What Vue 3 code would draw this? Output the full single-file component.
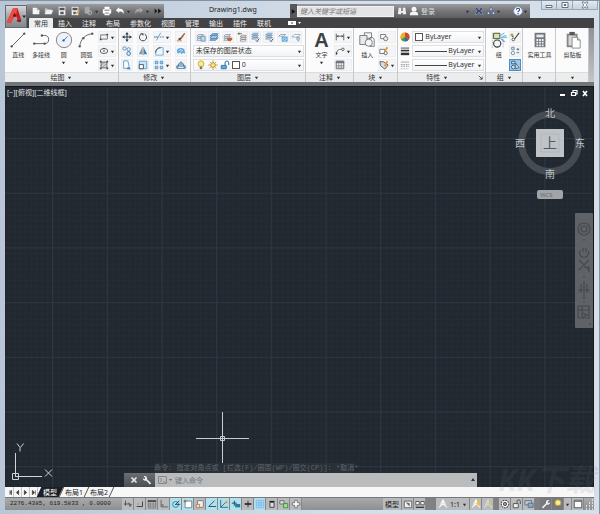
<script setup>
import { ref } from 'vue'

const quickItems = [
  { icon: 'new', label: '新建' },
  { icon: 'open', label: '打开' },
  { icon: 'save', label: '保存' },
  { icon: 'saveas', label: '另存为' },
  { icon: 'cloud', label: '云选项', menu: true },
  { icon: 'print', label: '打印' },
  { icon: 'undo', label: '放弃', menu: true },
  { icon: 'redo', label: '重做', menu: true },
  { icon: 'more', label: '更多' }
]
const tabs = ['常用', '插入', '注释', '布局', '参数化', '视图', '管理', '输出', '插件', '联机']
const activeTab = ref('常用')

const drawTools = [
  { icon: 'line', label: '直线' },
  { icon: 'pline', label: '多段线' },
  { icon: 'circle', label: '圆', menu: true },
  { icon: 'arc', label: '圆弧', menu: true }
]
const shapeTools = [
  { icon: 'rect', label: '矩形' },
  { icon: 'ellipse', label: '椭圆' },
  { icon: 'hatch', label: '图案填充' }
]
const modifyTools = [
  { icon: 'move', label: '移动' },
  { icon: 'rotate', label: '旋转' },
  { icon: 'trim', label: '修剪', menu: true },
  { icon: 'erase', label: '删除' },
  { icon: 'copy', label: '复制' },
  { icon: 'mirror', label: '镜像' },
  { icon: 'fillet', label: '圆角', menu: true },
  { icon: 'explode', label: '分解' },
  { icon: 'stretch', label: '拉伸' },
  { icon: 'scale', label: '缩放' },
  { icon: 'array', label: '阵列', menu: true },
  { icon: 'offset', label: '偏移' }
]
const layerTools = [
  { icon: 'lay1', label: '图层特性' },
  { icon: 'lay2', label: '置为当前' },
  { icon: 'lay3', label: '匹配' },
  { icon: 'lay4', label: '上一个' },
  { icon: 'lay5', label: '隔离' },
  { icon: 'lay5', label: '取消隔离' },
  { icon: 'lay6', label: '冻结' },
  { icon: 'lay7', label: '关闭' }
]
const noteTools = [
  { icon: 'dim', label: '标注', menu: true },
  { icon: 'leader', label: '引线', menu: true },
  { icon: 'table', label: '表格' }
]
const blockTools = [
  { icon: 'bcreate', label: '创建' },
  { icon: 'bedit', label: '编辑' },
  { icon: 'battr', label: '编辑属性', menu: true }
]
const groupTools = [
  { icon: 'ungroup', label: '解除编组' },
  { icon: 'gedit', label: '组编辑' },
  { icon: 'gpick', label: '组选择', on: true }
]
const statusTools = [
  { icon: 's-infer', label: '推断约束' },
  { icon: 's-snap', label: '捕捉模式' },
  { icon: 's-grid', label: '栅格显示' },
  { icon: 's-ortho', label: '正交模式' },
  { icon: 's-polar', label: '极轴追踪', on: true },
  { icon: 's-osnap', label: '对象捕捉', on: true },
  { icon: 's-3d', label: '三维对象捕捉' },
  { icon: 's-track', label: '对象捕捉追踪', on: true },
  { icon: 's-ducs', label: '动态 UCS', on: true },
  { icon: 's-dyn', label: '动态输入', on: true },
  { icon: 's-lwt', label: '线宽' },
  { icon: 's-tpy', label: '透明度', on: true },
  { icon: 's-qp', label: '快捷特性' },
  { icon: 's-sc', label: '选择循环' },
  { icon: 's-am', label: '注释监视器' }
]
const pagers = [
  { path: 'M5 1v6M7 1L5.500 4 7 7z', label: '首页' },
  { path: 'M6 1v6L3 4z', label: '上一页' },
  { path: 'M3 1v6l3-3z', label: '下一页' },
  { path: 'M3 1v6l3-3zM7 1v6', label: '末页' }
]
const layouts = ['模型', '布局1', '布局2']
const activeLayout = ref('模型')
const search = ref('')
const command = ref('')
</script>

<template>
  <div class="window">
    <svg class="defs" aria-hidden="true">
      <symbol id="i-new" viewBox="0 0 12 12"><path d="M2 2h5l3 3v5H2z" fill="#f4f4f4" /><path d="M7 2v3h3" fill="#aaa" /></symbol>
      <symbol id="i-open" viewBox="0 0 12 12"><path d="M1 10V3h3l1 1h4v2" fill="#c8c8c8" /><path d="M3 5h8L9 10H1z" fill="#f0f0f0" /></symbol>
      <symbol id="i-save" viewBox="0 0 12 12"><path d="M2 1h8v10H2z" fill="#f2f2f2" /><path d="M3 2h6v3H3zM4 7h4v3H4z" fill="#50565e" /></symbol>
      <symbol id="i-saveas" viewBox="0 0 12 12"><path d="M2 1h8v10H2z" fill="#f2f2f2" /><path d="M3 2h6v3H3zM4 7h3v3H4z" fill="#50565e" /><path d="M6 9l4-4 2 1-4 4z" fill="#e8a040" /></symbol>
      <symbol id="i-cloud" viewBox="0 0 12 12"><path d="M2 1h6v8H2z" fill="#a8a8a8" /><circle cx="8" cy="8" r="2.400" fill="none" stroke="#b4b4b4" stroke-width="1.200" /></symbol>
      <symbol id="i-print" viewBox="0 0 12 12"><path d="M3 1h6v3H3zM1 4h10v5H9v2H3V9H1z" fill="#fff" /><path d="M3 5h6M4 8.500h4" stroke="#555" /></symbol>
      <symbol id="i-undo" viewBox="0 0 12 12"><path d="M1 5l4-3.500v2c4-.5 6 2 5.500 6C9.500 7 8 6.500 5 6.500v2z" fill="#fff" /></symbol>
      <symbol id="i-redo" viewBox="0 0 12 12"><path d="M11 5L7 1.500v2C3 3 1 5.500 1.500 9.500 2.500 7 4 6.500 7 6.500v2z" fill="#a6a6a6" /></symbol>
      <symbol id="i-more" viewBox="0 0 12 12"><path d="M2 3l3 3-3 3zM6 3l4 3-4 3z" fill="#161616" /></symbol>

      <symbol id="i-line" viewBox="0 0 20 20"><path d="M3 17L17 3" stroke="#555a60" stroke-width="1" /><circle cx="3" cy="17" r="1.300" fill="#555" /><circle cx="17" cy="3" r="1.300" fill="#555" /></symbol>
      <symbol id="i-pline" viewBox="0 0 20 20"><path d="M2 14h12a4 4 0 0 0 0-9h-3" fill="none" stroke="#555a60" /><circle cx="2.500" cy="14" r="1.300" fill="#555" /><circle cx="14" cy="14" r="1.300" fill="#555" /><circle cx="11" cy="5" r="1.300" fill="#555" /></symbol>
      <symbol id="i-circle" viewBox="0 0 20 20"><circle cx="10" cy="10" r="8.500" fill="#f0f3f6" stroke="#777c82" /><path d="M10 10l4-4" stroke="#3573b5" /><circle cx="9.500" cy="10.500" r="1.300" fill="#2a68ad" /></symbol>
      <symbol id="i-arc" viewBox="0 0 20 20"><path d="M3 17C4 9 9 4 17 3" fill="none" stroke="#555a60" /><circle cx="3" cy="17" r="1.300" fill="#555" /><circle cx="7" cy="8" r="1.300" fill="#555" /><circle cx="17" cy="3" r="1.300" fill="#555" /></symbol>
      <symbol id="i-rect" viewBox="0 0 12 12"><path d="M2 3.500h8v5H2z" fill="none" stroke="#5b6068" /><path d="M1 8h2v2H1zM9 2h2v2H9z" fill="#44494f" /></symbol>
      <symbol id="i-ellipse" viewBox="0 0 12 12"><ellipse cx="6" cy="6" rx="4.500" ry="3" fill="none" stroke="#44494f" /><circle cx="6" cy="6" r="1" fill="#444" /><circle cx="6" cy="3" r="1" fill="#444" /></symbol>
      <symbol id="i-hatch" viewBox="0 0 12 12"><path d="M2.500 2.500h7v7h-7z" fill="#d0d2d5" stroke="#565b61" /><path d="M2 7l5-5M4 9l5-5" stroke="#777" stroke-width=".7" /><path d="M1 1h2v2H1zM9 1h2v2H9zM1 9h2v2H1zM9 9h2v2H9z" fill="#444" /></symbol>

      <symbol id="i-move" viewBox="0 0 12 12"><path d="M6 2v8M2 6h8" stroke="#26384c" stroke-width="1.200" /><path d="M6 0l2 3H4zM6 12l2-3H4zM0 6l3-2v4zM12 6L9 4v4z" fill="#26384c" /></symbol>
      <symbol id="i-rotate" viewBox="0 0 12 12"><path d="M4 2.500a4.300 4.300 0 1 0 4 0" fill="none" stroke="#44494f" stroke-width="1.200" /><path d="M2.500 1.500h4v3z" fill="#444" /></symbol>
      <symbol id="i-trim" viewBox="0 0 12 12"><path d="M0 6h5M7 6h2M10 6h2" stroke="#44729f" /><path d="M3 10l5-9" stroke="#4a92cf" /></symbol>
      <symbol id="i-erase" viewBox="0 0 12 12"><path d="M10 1L5 7l2 1 4-6z" fill="#a26b3b" /><path d="M5 7L2 8.500 4.500 10 7 8z" fill="#4c3b30" /><path d="M1 10.500h6" stroke="#c47755" /></symbol>
      <symbol id="i-copy" viewBox="0 0 12 12"><circle cx="3" cy="3" r="2" fill="none" stroke="#4c85b8" /><circle cx="8" cy="4" r="2" fill="none" stroke="#4c85b8" /><circle cx="8" cy="9" r="2.300" fill="#cfe4f6" stroke="#2b6fae" /></symbol>
      <symbol id="i-mirror" viewBox="0 0 12 12"><path d="M5 2v8H1z" fill="#7b98b4" /><path d="M7 2v8h4z" fill="#3484c5" /><path d="M6 1v10" stroke="#444" stroke-width=".7" /></symbol>
      <symbol id="i-fillet" viewBox="0 0 12 12"><path d="M2 11V8c0-4 3-6 6-6h3v9z" fill="#eef6fc" stroke="#62a6db" /><path d="M2 8c0-4 3-6 6-6" fill="none" stroke="#333" /></symbol>
      <symbol id="i-explode" viewBox="0 0 12 12"><path d="M1 6c0-3 5-5 9-2l1 5-3-1-1 2-2-2-3 1z" fill="#5aa5dc" /><path d="M3 6l3-2 2 2M5 8l3-3" stroke="#fff" stroke-width=".8" fill="none" /></symbol>
      <symbol id="i-stretch" viewBox="0 0 12 12"><path d="M2 1h5l2 9H2z" fill="#fff" stroke="#4d91c8" /><path d="M7 8l4 3H6z" fill="#2f7fc0" /></symbol>
      <symbol id="i-scale" viewBox="0 0 12 12"><path d="M1.500 1.500h9v9h-9z" fill="#cfe6f7" stroke="#4d9bd5" /><path d="M1.500 5.500h5v5h-5z" fill="#fff" stroke="#33465a" /></symbol>
      <symbol id="i-array" viewBox="0 0 12 12"><path d="M1.500 1.500h3v3h-3zM7.500 1.500h3v3h-3zM1.500 7.500h3v3h-3zM7.500 7.500h3v3h-3z" fill="#b5dbf6" stroke="#3c89c8" /></symbol>
      <symbol id="i-offset" viewBox="0 0 12 12"><path d="M1 10V7h2V5l3-3 3 3v2h2v3z" fill="#8fb3d2" stroke="#3b6a94" /><path d="M3 9h6" stroke="#fff" /></symbol>

      <symbol id="i-sheets" viewBox="0 0 12 12"><path d="M1 5l2-2h6L7 5z" fill="#fff" stroke="#71859a" stroke-width=".8" /><path d="M1 7.500l2-2h6l-2 2z" fill="#dce8f3" stroke="#71859a" stroke-width=".8" /><path d="M1 10l2-2h6l-2 2z" fill="#fff" stroke="#71859a" stroke-width=".8" /></symbol>
      <symbol id="i-lay1" viewBox="0 0 12 12"><use href="#i-sheets" /><path d="M6 5h5v6H6z" fill="#bcd8ee" stroke="#4d7ba5" stroke-width=".8" /></symbol>
      <symbol id="i-lay2" viewBox="0 0 12 12"><path d="M1 5l3-3h7L8 5zM1 10l3-3h7l-3 3z" fill="#7fb1dc" stroke="#3a6e9e" stroke-width=".8" /><path d="M1 7.500l3-3h7l-3 3z" fill="#b9d7f0" stroke="#3a6e9e" stroke-width=".8" /></symbol>
      <symbol id="i-lay3" viewBox="0 0 12 12"><use href="#i-sheets" /><path d="M5 7h6v2l-2 2H7L5 9z" fill="#bf6230" /></symbol>
      <symbol id="i-lay4" viewBox="0 0 12 12"><path d="M1 2h5M1 2l2-1M1 2l2 1" stroke="#444" stroke-width=".8" fill="none" /><path d="M4 6l1-2h6l-1 2zM4 8.500l1-2h6l-1 2zM4 11l1-2h6l-1 2z" fill="#fff" stroke="#777" stroke-width=".8" /></symbol>
      <symbol id="i-lay5" viewBox="0 0 12 12"><path d="M2 3.500l2-2h6l-2 2zM2 6l2-2h6L8 6zM2 8.500l2-2h6l-2 2z" fill="#cfe1f1" stroke="#587ea3" stroke-width=".8" /><path d="M7 10l1.500 1.500L11 8" stroke="#24354a" fill="none" /></symbol>
      <symbol id="i-lay6" viewBox="0 0 12 12"><path d="M1 5l2-2h6L7 5z" fill="#fff" stroke="#71859a" stroke-width=".8" /><path d="M5 6h6v5H5z" fill="#bfe0f7" stroke="#4a95cf" /><path d="M5 11l6-5M5 6l6 5" stroke="#4a95cf" stroke-width=".7" /></symbol>
      <symbol id="i-lay7" viewBox="0 0 12 12"><path d="M1 6l3-3h7L8 6z" fill="#fff" stroke="#8294a6" stroke-width=".8" /><path d="M7 6h3v3l-1 2-2-2z" fill="#bcd7ee" stroke="#6a8fb2" stroke-width=".8" /></symbol>
      <symbol id="i-bulb" viewBox="0 0 12 12"><circle cx="6" cy="4.500" r="3.500" fill="#fbeb83" stroke="#c6a23c" /><path d="M4.500 8h3v3h-3z" fill="#777" /></symbol>
      <symbol id="i-sun" viewBox="0 0 12 12"><path d="M6 0v12M0 6h12M2 2l8 8M10 2l-8 8" stroke="#bc9440" stroke-width=".9" /><circle cx="6" cy="6" r="2.800" fill="#fbe580" stroke="#b58a30" /></symbol>
      <symbol id="i-lock" viewBox="0 0 12 12"><path d="M1.500 6.500h6v4h-6z" fill="#66a9dc" stroke="#2f6c9f" /><path d="M6 6V3.500a2.200 2.200 0 0 1 4.500 0V6" fill="none" stroke="#2f6c9f" stroke-width="1.200" /></symbol>

      <symbol id="i-dim" viewBox="0 0 12 12"><path d="M1.500 2v8M10.500 2v8M2 5h8" stroke="#4b5056" /><path d="M2 5l2-1.500v3zM10 5L8 3.500v3z" fill="#444" /></symbol>
      <symbol id="i-leader" viewBox="0 0 12 12"><path d="M2 10c0-5 2-6 6-6" fill="none" stroke="#4b5056" /><circle cx="9.500" cy="4" r="1.500" fill="#fff" stroke="#444" /><path d="M1 11V7l2 2z" fill="#333" /></symbol>
      <symbol id="i-table" viewBox="0 0 12 12"><path d="M1.500 1.500h9v9h-9z" fill="#fff" stroke="#596068" /><path d="M1 1h10v3H1z" fill="#6e7781" /><path d="M1 6.500h10M1 8.500h10M4.500 4v7M7.500 4v7" stroke="#6e7781" stroke-width=".8" /></symbol>
      <symbol id="i-insert" viewBox="0 0 20 20"><path d="M7 2h8v6H7z" fill="#f7f8f9" stroke="#70767d" /><path d="M2 5h8v10H2z" fill="#e8eaec" stroke="#70767d" /><circle cx="12" cy="13" r="4" fill="#f4f5f6" stroke="#70767d" /><path d="M12 9l3-3 3 3v8h-5" fill="none" stroke="#70767d" /></symbol>
      <symbol id="i-bcreate" viewBox="0 0 12 12"><path d="M2 3h6v5H2z" fill="#fff" stroke="#666" /><circle cx="8" cy="8" r="2.500" fill="#eee" stroke="#666" /></symbol>
      <symbol id="i-bedit" viewBox="0 0 12 12"><path d="M1 4h6v5H1z" fill="#fff" stroke="#666" /><circle cx="8" cy="8.500" r="2" fill="#eee" stroke="#666" /><path d="M6 6l3-5 2 1-3 5z" fill="#e49b3c" /></symbol>
      <symbol id="i-battr" viewBox="0 0 12 12"><path d="M1 2h4l6 4-4 5-5-4z" fill="#d8dadd" stroke="#555" /><path d="M6 7l3-6 2 1-3 6z" fill="#e49b3c" /></symbol>

      <symbol id="i-wheel" viewBox="0 0 12 12"><circle cx="6" cy="6" r="5.500" fill="#e5b93a" /><path d="M6 6V.5a5.500 5.500 0 0 1 4.800 8.200z" fill="#d4452f" /><path d="M6 6L1.200 8.700A5.500 5.500 0 0 1 6 .5z" fill="#e8b32e" /><path d="M6 6v5.500a5.500 5.500 0 0 1-4.800-2.800z" fill="#3ea04c" /><path d="M6 6l4.800 2.700A5.500 5.500 0 0 1 6 11.500z" fill="#3767bb" /></symbol>
      <symbol id="i-weights" viewBox="0 0 12 12"><path d="M1 2.500h10" stroke="#333" /><path d="M1 5.500h10" stroke="#333" stroke-width="2" /><path d="M1 9.500h10" stroke="#333" stroke-width="3" /></symbol>
      <symbol id="i-types" viewBox="0 0 12 12"><path d="M1 2.500h10" stroke="#999" /><path d="M1 5.500h10M1 7.500h10" stroke="#888" stroke-dasharray="2 1" /><path d="M1 10.500h10" stroke="#999" stroke-dasharray="1 1" /></symbol>

      <symbol id="i-group" viewBox="0 0 20 20"><path d="M2.500 2v17M14.500 9v10" stroke="#999" stroke-dasharray="1 1" /><path d="M4 2.500h7v6H4z" fill="#dce899" stroke="#3b4148" /><circle cx="8" cy="14" r="4" fill="#f4f6f8" stroke="#3b4148" stroke-width="1.300" /><path d="M12 5l4-3M12 7h7M12 9l5 3M14 6l4-1M13 8l2 4" stroke="#4fa4dd" /></symbol>
      <symbol id="i-ungroup" viewBox="0 0 12 12"><path d="M1 3l3 3M11 1L5 9" stroke="#504a34" stroke-width="1.400" /><path d="M1 2h3v3H1z" fill="#9fa95c" /><circle cx="4" cy="9" r="1.600" fill="#fff" stroke="#444" /></symbol>
      <symbol id="i-gedit" viewBox="0 0 12 12"><path d="M2 1.500h3v3H2z" fill="#dce7f1" stroke="#6b7f94" /><circle cx="3.500" cy="8.500" r="2" fill="#fff" stroke="#6b7f94" /><path d="M8 4h3M9.500 2.500v3M8 8h3" stroke="#56606b" /></symbol>
      <symbol id="i-gpick" viewBox="0 0 12 12"><path d="M2 1.500h4v3H2z" fill="#d8ecfa" stroke="#28506f" /><circle cx="4" cy="8.500" r="2.200" fill="#d8ecfa" stroke="#28506f" /><path d="M7 4v7l1.500-1.500h2.500z" fill="#fff" stroke="#28384a" stroke-width=".8" /></symbol>
      <symbol id="i-calc" viewBox="0 0 20 20"><path d="M4 2h12v16H4z" fill="#71777e" /><path d="M6 4h8v3H6z" fill="#e5eaee" /><path d="M6 9h2v2H6zM9 9h2v2H9zM12 9h2v2h-2zM6 12h2v2H6zM9 12h2v2H9zM12 12h2v2h-2zM6 15h2v2H6zM9 15h2v2H9zM12 15h2v2h-2z" fill="#f2f3f4" /></symbol>
      <symbol id="i-clip" viewBox="0 0 20 20"><path d="M3 3h12v15H3z" fill="#8b857f" /><path d="M6 1h6v4H6z" fill="#555b62" /><path d="M5 5h8v11H5z" fill="#d9d9d8" /><path d="M9 7h6l3 3v9H9z" fill="#fff" stroke="#83888d" /><path d="M15 7v3h3" fill="#ccc" stroke="#83888d" /></symbol>

      <symbol id="i-bino" viewBox="0 0 12 12"><path d="M2 2h3v4h2V2h3l1 8H7V8H5v2H1z" fill="#eee" /></symbol>
      <symbol id="i-user" viewBox="0 0 12 12"><circle cx="6" cy="4" r="3" fill="#f4f4f4" /><path d="M1 11c0-4 2-4 5-4s5 0 5 4z" fill="#f4f4f4" /></symbol>
      <symbol id="i-exch" viewBox="0 0 12 12"><path d="M1 2h3l2 3 2-3h3L8 6l3 4H8L6 7l-2 3H1l3-4z" fill="#283f73" stroke="#a4b2ca" stroke-width=".6" /></symbol>
      <symbol id="i-apps" viewBox="0 0 12 12"><path d="M6 1l2 4H4zM3 6l2 4H1zM9 6l2 4H7z" fill="#dbe4f4" stroke="#3a5487" stroke-width=".7" /></symbol>
      <symbol id="i-help" viewBox="0 0 12 12"><circle cx="6" cy="6" r="5.300" fill="#f4f7fb" stroke="#7c91b0" /><path d="M4 4.500C4 2 8.200 2 8 4.500 8 6 6 5.700 6 7.500M6 8.500v1.300" fill="none" stroke="#294a7c" stroke-width="1.300" /></symbol>

      <symbol id="i-s-infer" viewBox="0 0 12 12"><path d="M3 2v6M1 6h7" stroke="#444" /><path d="M6 4l5 3-3 3z" fill="#666" /></symbol>
      <symbol id="i-s-snap" viewBox="0 0 12 12"><path d="M2 9h7V3" fill="none" stroke="#444" stroke-width="1.200" /><path d="M3 6h2" stroke="#777" /></symbol>
      <symbol id="i-s-grid" viewBox="0 0 12 12"><path d="M1.500 2v9h9V2z" fill="#bbb" stroke="#777" /><path d="M1 2.500h10" stroke="#444" stroke-width="2" /><path d="M1 6h10M1 8.500h10M4 3v8M7.500 3v8" stroke="#777" stroke-width=".8" /></symbol>
      <symbol id="i-s-ortho" viewBox="0 0 12 12"><path d="M2.500 1v8.500H11M2.500 7H5v2" fill="none" stroke="#5a5a5a" /></symbol>
      <symbol id="i-s-polar" viewBox="0 0 12 12"><circle cx="5.500" cy="6.500" r="3.500" fill="none" stroke="#237695" /><path d="M5 6.500h6M5 7l5-5" stroke="#15465d" /></symbol>
      <symbol id="i-s-osnap" viewBox="0 0 12 12"><path d="M2.500 2.500h8v8h-8z" fill="#fff" stroke="#5a7b87" /><path d="M1 1h3v3H1z" fill="#b96d4d" /></symbol>
      <symbol id="i-s-3d" viewBox="0 0 12 12"><path d="M3 2h7v8H3z" fill="#eee" stroke="#777" /><path d="M1.500 6.500h4v4h-4z" fill="#f6d8c5" stroke="#c2714b" /></symbol>
      <symbol id="i-s-track" viewBox="0 0 12 12"><path d="M9 2L2 9h9" fill="none" stroke="#246074" stroke-width="1.200" /></symbol>
      <symbol id="i-s-ducs" viewBox="0 0 12 12"><path d="M2 1v9h9M2 10l6-6" fill="none" stroke="#235e72" /><path d="M8 1l3 3-3 2z" fill="#e4a239" /></symbol>
      <symbol id="i-s-dyn" viewBox="0 0 12 12"><path d="M4 2v6M1 5h6" stroke="#1f5567" stroke-width="1.200" /><path d="M5 6h6v4H5z" fill="#2f7a91" /></symbol>
      <symbol id="i-s-lwt" viewBox="0 0 12 12"><path d="M6 2v8" stroke="#222" /><path d="M2 6h8" stroke="#222" stroke-width="2" /></symbol>
      <symbol id="i-s-tpy" viewBox="0 0 12 12"><path d="M1 1h10v10H1z" fill="#7fbbe7" /><path d="M1 3h10M1 6h10M1 9h10M3 1v10M6 1v10M9 1v10" stroke="#b5dcf6" stroke-width=".7" /></symbol>
      <symbol id="i-s-qp" viewBox="0 0 12 12"><path d="M3.500 4h5v6h-5z" fill="#ddd" stroke="#333" /><path d="M3 3h6" stroke="#222" stroke-width="1.500" /></symbol>
      <symbol id="i-s-sc" viewBox="0 0 12 12"><path d="M1 2h5v4H1z" fill="#ddd" stroke="#666" /><path d="M5.500 5.500h5v5h-5z" fill="#a7dd9b" stroke="#308c32" /></symbol>
      <symbol id="i-s-am" viewBox="0 0 12 12"><path d="M4.500 1.500h3v3h3v3h-3v3h-3v-3h-3v-3h3z" fill="#fff" stroke="#666" /></symbol>
      <symbol id="i-s-lay" viewBox="0 0 12 12"><path d="M1.500 2.500h9v8h-9z" fill="#eee" stroke="#555" /><path d="M3 4l5 5V5z" fill="#666" /></symbol>
      <symbol id="i-s-view" viewBox="0 0 12 12"><path d="M1 3h4v4H1zM7 3h4v4H7z" fill="#fff" stroke="#444" /><path d="M1 10h10" stroke="#333" stroke-width="1.500" /></symbol>
      <symbol id="i-s-anno" viewBox="0 0 12 12"><path d="M6 1v5M6 6l-5 4M6 6l5 4M3 7l3-6 3 6" fill="none" stroke="#f8f8f8" stroke-width="1.300" /></symbol>
      <symbol id="i-s-anno2" viewBox="0 0 12 12"><use href="#i-s-anno" /><path d="M7 3l3-2v4l1 2-4 1z" fill="#efc13d" /></symbol>
      <symbol id="i-s-gear" viewBox="0 0 12 12"><circle cx="6" cy="6" r="4.500" fill="#fafafa" stroke="#444" stroke-width="1.300" stroke-dasharray="2 1" /><circle cx="6" cy="6" r="2" fill="#999" stroke="#444" /></symbol>
      <symbol id="i-s-lock" viewBox="0 0 12 12"><path d="M1.500 5.500h6v5h-6z" fill="#eee" stroke="#444" /><path d="M6 5V3a2 2 0 0 1 4 0v3" fill="none" stroke="#444" /></symbol>
      <symbol id="i-s-hw" viewBox="0 0 12 12"><path d="M1 2h8v5H1z" fill="#b9c9d5" stroke="#667" /><path d="M5 5h6v5H5z" fill="#86acc7" stroke="#567" /></symbol>
      <symbol id="i-wrench" viewBox="0 0 12 12"><path d="M1 10l5-5c-.5-3 2-4.500 4-3.500L8 3.500 9 5l2-1c0 2-2 3.500-4 2.500l-4.500 5z" fill="#f1f1f1" /></symbol>
      <symbol id="i-s-clean" viewBox="0 0 12 12"><path d="M1.500 1.500h9v9h-9z" fill="#fafafa" stroke="#444" /><path d="M2 3h8" stroke="#4b6b8a" /></symbol>
      <symbol id="i-arrow" viewBox="0 0 6 6"><path d="M1 2h4L3 5z" fill="currentColor" /></symbol>
    </svg>

    <header class="head">
      <button class="app-button" aria-label="应用程序菜单">
        <svg viewBox="0 0 22 22">
          <path d="M7 3l5-1 4 13-4-1-1-3-3 1-3 6-4-1z" fill="#c91d20" />
          <path d="M7 3l5-1-1 6-3 4-3 6-4-1z" fill="#ee4b45" />
          <path d="M9 7l2 4H7z" fill="#6a1114" />
          <path d="M12 14l4 1-1 2-4-1z" fill="#8d1418" />
          <path d="M17 10h4l-2 2.500z" fill="#222" />
        </svg>
      </button>
      <div class="head-main">
        <div class="title-row">
          <nav class="quick" aria-label="快速访问">
            <button v-for="q in quickItems" :key="q.icon" :aria-label="q.label" :class="{ wide: q.menu }">
              <svg class="ic"><use :href="'#i-' + q.icon" /></svg>
              <svg v-if="q.menu" class="tri"><use href="#i-arrow" /></svg>
            </button>
          </nav>
          <h1 class="doc">Drawing1.dwg</h1>
          <div class="info">
            <button class="expand" aria-label="展开搜索"><svg viewBox="0 0 6 8"><path d="M1 1l4 3-4 3z" fill="#111" /></svg></button>
            <input v-model="search" class="search" aria-label="搜索" placeholder="键入关键字或短语">
            <button class="info-first" aria-label="查找"><svg class="ic"><use href="#i-bino" /></svg></button>
            <button class="login"><svg class="ic"><use href="#i-user" /></svg>登录</button>
            <span class="fill"></span>
            <svg class="tri"><use href="#i-arrow" /></svg>
            <button class="gap" aria-label="Exchange"><svg class="ic"><use href="#i-exch" /></svg></button>
            <button aria-label="应用"><svg class="ic"><use href="#i-apps" /></svg><svg class="tri"><use href="#i-arrow" /></svg></button>
            <button class="help" aria-label="帮助"><svg class="ic"><use href="#i-help" /></svg><svg class="tri"><use href="#i-arrow" /></svg></button>
          </div>
          <div class="win-buttons">
            <button aria-label="最小化"><svg viewBox="0 0 10 8"><path d="M2 4.500h6v2H2z" fill="#fff" stroke="#68717c" /></svg></button>
            <button aria-label="最大化"><svg viewBox="0 0 10 8"><path d="M2 1.500h6v5H2zM4 3.500h2v1H4z" fill="#fff" stroke="#68717c" /></svg></button>
            <button class="close" aria-label="关闭"><svg viewBox="0 0 10 8"><path d="M2 1h2l1 1.500L6 1h2L6.300 4 8 7H6L5 5.500 4 7H2l1.700-3z" fill="#fff" stroke="#68717c" stroke-width=".8" /></svg></button>
          </div>
        </div>
        <nav class="tabs">
          <button v-for="t in tabs" :key="t" :class="{ active: t === activeTab }" @click="activeTab = t">{{ t }}</button>
          <button class="ribbon-toggle" aria-label="最小化功能区"><svg viewBox="0 0 14 6"><path d="M0 1h8v4H0z" fill="#fff" /><path d="M3 3h2" stroke="#444" /><path d="M10 2h3l-1.500 2z" fill="#fff" /></svg></button>
        </nav>
      </div>
    </header>

    <section class="ribbon">
      <div class="panel">
        <div class="body draw">
          <button v-for="d in drawTools" :key="d.icon" class="big">
            <svg class="big-ic"><use :href="'#i-' + d.icon" /></svg>
            <span>{{ d.label }}</span>
            <svg v-if="d.menu" class="tri"><use href="#i-arrow" /></svg>
          </button>
          <div class="col">
            <button v-for="s in shapeTools" :key="s.icon" class="small wide" :aria-label="s.label"><svg class="ic"><use :href="'#i-' + s.icon" /></svg><svg class="tri"><use href="#i-arrow" /></svg></button>
          </div>
        </div>
        <button class="caption">绘图<svg class="tri"><use href="#i-arrow" /></svg></button>
      </div>
      <div class="panel">
        <div class="body modify">
          <button v-for="m in modifyTools" :key="m.icon" class="small" :class="{ wide: m.menu }" :aria-label="m.label"><svg class="ic"><use :href="'#i-' + m.icon" /></svg><svg v-if="m.menu" class="tri"><use href="#i-arrow" /></svg></button>
        </div>
        <button class="caption">修改<svg class="tri"><use href="#i-arrow" /></svg></button>
      </div>
      <div class="panel">
        <div class="body rows">
          <div class="layer-tools">
            <button v-for="(l, i) in layerTools" :key="i" class="small" :aria-label="l.label"><svg class="ic"><use :href="'#i-' + l.icon" /></svg></button>
          </div>
          <div class="combo">
            <select aria-label="图层状态"><option>未保存的图层状态</option></select>
            <svg class="tri"><use href="#i-arrow" /></svg>
          </div>
          <div class="combo icons">
            <svg class="ic"><use href="#i-bulb" /></svg>
            <svg class="ic"><use href="#i-sun" /></svg>
            <svg class="ic"><use href="#i-lock" /></svg>
            <span class="swatch"></span>
            <select aria-label="图层"><option>0</option></select>
            <svg class="tri"><use href="#i-arrow" /></svg>
          </div>
        </div>
        <button class="caption">图层<svg class="tri"><use href="#i-arrow" /></svg></button>
      </div>
      <div class="panel">
        <div class="body">
          <button class="big text-tool"><b>A</b><span>文字</span><svg class="tri"><use href="#i-arrow" /></svg></button>
          <div class="col">
            <button v-for="n in noteTools" :key="n.icon" class="small wide" :aria-label="n.label"><svg class="ic"><use :href="'#i-' + n.icon" /></svg><svg v-if="n.menu" class="tri"><use href="#i-arrow" /></svg></button>
          </div>
        </div>
        <button class="caption">注释<svg class="tri"><use href="#i-arrow" /></svg></button>
      </div>
      <div class="panel">
        <div class="body">
          <button class="big"><svg class="big-ic"><use href="#i-insert" /></svg><span>插入</span></button>
          <div class="col">
            <button v-for="b in blockTools" :key="b.icon" class="small wide" :aria-label="b.label"><svg class="ic"><use :href="'#i-' + b.icon" /></svg><svg v-if="b.menu" class="tri"><use href="#i-arrow" /></svg></button>
          </div>
        </div>
        <button class="caption">块<svg class="tri"><use href="#i-arrow" /></svg></button>
      </div>
      <div class="panel">
        <div class="body rows props">
          <div class="prop"><svg class="ic"><use href="#i-wheel" /></svg><div class="combo icons"><span class="swatch"></span><select aria-label="颜色"><option>ByLayer</option></select><svg class="tri"><use href="#i-arrow" /></svg></div></div>
          <div class="prop"><svg class="ic"><use href="#i-weights" /></svg><div class="combo"><i></i><select aria-label="线宽"><option>ByLayer</option></select><svg class="tri"><use href="#i-arrow" /></svg></div></div>
          <div class="prop"><svg class="ic"><use href="#i-types" /></svg><div class="combo"><i></i><select aria-label="线型"><option>ByLayer</option></select><svg class="tri"><use href="#i-arrow" /></svg></div></div>
        </div>
        <div class="caption-row">
          <button class="caption">特性<svg class="tri"><use href="#i-arrow" /></svg></button>
          <button class="launcher" aria-label="特性对话框"><svg viewBox="0 0 6 6"><path d="M1 1l4 4M5 2v3H2" fill="none" stroke="#444" /></svg></button>
        </div>
      </div>
      <div class="panel">
        <div class="body">
          <button class="big"><svg class="big-ic"><use href="#i-group" /></svg><span>组</span></button>
          <div class="col">
            <button v-for="g in groupTools" :key="g.icon" class="small" :class="{ on: g.on }" :aria-label="g.label"><svg class="ic"><use :href="'#i-' + g.icon" /></svg></button>
          </div>
        </div>
        <button class="caption">组<svg class="tri"><use href="#i-arrow" /></svg></button>
      </div>
      <div class="panel">
        <div class="body"><button class="big"><svg class="big-ic"><use href="#i-calc" /></svg><span>实用工具</span></button></div>
        <button class="caption" aria-label="实用工具菜单"><svg class="tri"><use href="#i-arrow" /></svg></button>
      </div>
      <div class="panel">
        <div class="body"><button class="big"><svg class="big-ic"><use href="#i-clip" /></svg><span>剪贴板</span></button></div>
        <button class="caption" aria-label="剪贴板菜单"><svg class="tri"><use href="#i-arrow" /></svg></button>
      </div>
      <div class="tail"></div>
    </section>

    <main class="canvas">
      <svg class="grid" aria-hidden="true">
        <defs>
          <pattern id="minor" x="47.500" y="51" width="5.470" height="5.470" patternUnits="userSpaceOnUse">
            <path d="M0 .5h5.470M.5 0v5.470" stroke="#252d36" stroke-width=".6" />
          </pattern>
          <pattern id="major" x="47" y="51" width="54.700" height="54.700" patternUnits="userSpaceOnUse">
            <path d="M0 .5h54.700M.5 0v54.700" stroke="#2d3741" stroke-width="1" />
          </pattern>
        </defs>
        <rect width="100%" height="100%" fill="url(#minor)" />
        <rect width="100%" height="100%" fill="url(#major)" />
      </svg>
      <div class="view-label">[−][俯视][二维线框]</div>
      <div class="doc-buttons">
        <button aria-label="最小化图形"><svg viewBox="0 0 8 8"><path d="M1 5h5v2H1z" fill="#fff" /></svg></button>
        <button aria-label="还原图形"><svg viewBox="0 0 8 8"><path d="M3 3V1.500h4V5H5.500M1.500 3.500h4v3h-4z" fill="none" stroke="#fff" stroke-width="1.200" /></svg></button>
        <button aria-label="关闭图形"><svg viewBox="0 0 8 8"><path d="M2 2l4 5M6 2L2 7" stroke="#fff" stroke-width="1.700" /></svg></button>
      </div>
      <svg class="cube" viewBox="0 0 74 78">
        <circle cx="37" cy="38" r="28.500" fill="none" stroke="#474c52" stroke-width="7" />
        <path d="M23 24h28v28H23z" fill="#bfc3c7" />
        <path d="M28 29h18v18H28z" fill="none" stroke="#a9afb6" stroke-width=".6" />
        <text x="37" y="43" font-size="14" fill="#4e5967">上</text>
        <text x="37" y="12" font-size="10" fill="#c3c6ca">北</text>
        <text x="37" y="73" font-size="10" fill="#c3c6ca">南</text>
        <text x="7" y="42" font-size="10" fill="#c3c6ca">西</text>
        <text x="67" y="42" font-size="10" fill="#c3c6ca">东</text>
      </svg>
      <button class="wcs">WCS</button>
      <svg class="nav-bar" viewBox="0 0 18 115">
        <rect width="18" height="115" rx="1" fill="#5f6368" />
        <g fill="none" stroke="#45494e" stroke-width="1.200">
          <circle cx="9" cy="16" r="6" /><circle cx="9" cy="16" r="3" />
          <path d="M4 39l2 5h6l2-6M5 39v-2M8 39v-4M11 39v-4M4 47l10 10M14 47L4 57M9 54h5v5" />
          <path d="M9 68v18M3 77h12M6 71v9M12 71v9M3 93h11v12H3zM3 97h11M7 93v12M8 100l4 2-4 2" />
          <path d="M8 27h2M8 64h2M8 89h2M14 111h2" />
        </g>
      </svg>
      <svg class="ucs" viewBox="0 0 52 46">
        <path d="M11.500 12v24M12 35.500h26M8.500 32.500h6v6h-6zM13 2.500l3 4v4M19.500 2.500l-3 4M41 28.500l7 7M48 28.500l-7 7" fill="none" stroke="#cfd2d6" />
      </svg>
      <svg class="cross" viewBox="0 0 53 53"><path d="M26.500 0v53M0 26.500h53M24.500 24.500h4v4h-4z" fill="none" stroke="#c9cdd2" /></svg>
      <div class="cmd">
        <div class="history">命令: 指定对角点或 [栏选(F)/圈围(WP)/圈交(CP)]: *取消*</div>
        <div class="cmd-line">
          <div class="cmd-tools">
            <button aria-label="关闭命令行"><svg class="ic" viewBox="0 0 12 12"><path d="M3 3l6 6M9 3l-6 6" stroke="#eee" stroke-width="1.800" /></svg></button>
            <button aria-label="自定义"><svg class="ic flip"><use href="#i-wrench" /></svg></button>
          </div>
          <button class="prompt" aria-label="最近使用的命令"><svg viewBox="0 0 16 10"><path d="M1.500 1.500h8v7h-8zM3 3l2 2-2 2M6 7h3" fill="none" stroke="#858789" /><path d="M12 4h3l-1.500 2z" fill="#666" /></svg></button>
          <input v-model="command" aria-label="命令" placeholder="键入命令">
          <button class="up" aria-label="命令历史"><svg viewBox="0 0 6 6"><path d="M1 4h4L3 1z" fill="#333" /></svg></button>
        </div>
      </div>
    </main>

    <nav class="layouts">
      <button v-for="p in pagers" :key="p.label" class="pager" :aria-label="p.label"><svg viewBox="0 0 9 8"><path :d="p.path" fill="#333" stroke="#333" stroke-width=".7" /></svg></button>
      <button v-for="l in layouts" :key="l" class="layout" :class="{ active: l === activeLayout }" @click="activeLayout = l"><span>{{ l }}</span></button>
    </nav>

    <footer class="status">
      <output class="coords">2276.4385, 619.5833 , 0.0000</output>
      <button v-for="s in statusTools" :key="s.icon" class="st" :class="{ on: s.on }" :aria-label="s.label"><svg class="ic"><use :href="'#i-' + s.icon" /></svg></button>
      <span class="fill"></span>
      <button class="st auto">模型</button>
      <button class="st" aria-label="快速查看布局"><svg class="ic"><use href="#i-s-lay" /></svg></button>
      <button class="st" aria-label="快速查看图形"><svg class="ic"><use href="#i-s-view" /></svg></button>
      <span class="sep"></span>
      <button class="st auto scale"><svg class="ic"><use href="#i-s-anno" /></svg>1:1<svg class="tri"><use href="#i-arrow" /></svg></button>
      <button class="st" aria-label="注释可见性"><svg class="ic"><use href="#i-s-anno2" /></svg></button>
      <button class="st" aria-label="自动缩放"><svg class="ic dim"><use href="#i-s-anno2" /></svg></button>
      <span class="sep thin"></span>
      <button class="st" aria-label="切换工作空间"><svg class="ic"><use href="#i-s-gear" /></svg></button>
      <button class="st" aria-label="锁定"><svg class="ic"><use href="#i-s-lock" /></svg></button>
      <button class="st" aria-label="硬件加速"><svg class="ic"><use href="#i-s-hw" /></svg></button>
      <span class="sep thin"></span>
      <button class="st dark" aria-label="工具"><svg class="ic"><use href="#i-wrench" /></svg></button>
      <button class="st dark" aria-label="隔离对象"><svg class="ic"><use href="#i-bulb" /></svg></button>
      <button class="st more" aria-label="状态栏菜单"><svg class="tri"><use href="#i-arrow" /></svg></button>
      <button class="st" aria-label="全屏显示"><svg class="ic"><use href="#i-s-clean" /></svg></button>
      <svg class="grip" viewBox="0 0 10 12"><path d="M8 2h1M5 5h1M8 5h1M2 8h1M5 8h1M8 8h1M2 11h1M5 11h1M8 11h1" stroke="#eee" stroke-width="1.500" /></svg>
    </footer>
    <div class="watermark">KK下载</div>
  </div>
</template>

<style>
body { background: #c9d5e3; }
</style>

<style scoped>
.window {
  position: relative;
  box-sizing: border-box;
  display: flex;
  flex-direction: column;
  min-height: 100vh;
  padding: 0 5px 4px;
  border: solid #8491a0;
  border-width: 1px 1px 0 0;
  background: linear-gradient(90deg, #b9c6d5, #d5dfeb 60%, #d5dfea);
  font-family: "Noto Sans", "Noto Sans CJK SC", sans-serif;
  font-size: 7px;
  line-height: 9px;
  color: #333;
}
.defs { position: absolute; width: 0; height: 0; }
button, input, select { font: inherit; color: inherit; margin: 0; padding: 0; border: 0; background: none; border-radius: 0; min-width: 0; }
button { display: flex; align-items: center; justify-content: center; white-space: nowrap; }
svg { display: block; flex: none; }
.ic { width: 10px; height: 10px; }
.tri { width: 5px; height: 5px; color: #333; }
.fill { flex: 1; }

.head { display: flex; }
.app-button { width: 22px; height: 23px; margin-top: 4px; border: 1px solid #656b72; background: linear-gradient(#d5d7da, #a2a5a9 50%, #83878b); box-sizing: border-box; }
.app-button svg { width: 21px; height: 21px; }
.head-main { flex: 1; min-width: 0; display: flex; flex-direction: column; }
.title-row { display: flex; height: 17px; }
.quick { display: flex; align-items: center; margin-top: 3px; width: 137px; padding-left: 4px; gap: 3px; box-sizing: border-box; background: linear-gradient(#9a9c9e, #747679 50%, #5c5e61); }
.quick button.wide { gap: 1px; }
.doc { flex: 1; margin: 4px 0 0 45px; font-size: 7px; line-height: 9px; font-weight: 400; color: #222; white-space: nowrap; }
.info { display: flex; align-items: center; width: 240px; margin-top: 3px; background: linear-gradient(#9a9c9e, #747679 50%, #5c5e61); }
.info-first { margin-left: 3px; }
.expand { width: 7px; height: 14px; background: #56585b; }
.expand svg { width: 5px; height: 7px; }
.search { width: 97px; height: 11px; box-sizing: border-box; padding: 0 2px; background: #e3e4e6; border: 1px solid #f2f2f2; }
.search::placeholder { color: #777; font-style: italic; opacity: 1; }
.login { color: #ddd; gap: 2px; margin-left: 2px; }
.gap { margin-left: 4px; }
.gap + button { margin-left: 2px; }
.help { margin-left: 12px; margin-right: 2px; }
.win-buttons { display: flex; margin-left: 11px; margin-right: -4px; height: 9px; }
.win-buttons button { width: 16px; border: solid #9ba7b5; border-width: 0 1px 1px 0; background: linear-gradient(#e3eaf2, #c6d2df); box-sizing: border-box; }
.win-buttons button:first-child { border-left-width: 1px; }
.win-buttons .close { width: 25px; }
.win-buttons svg { width: 10px; height: 8px; }
.tabs { display: flex; height: 10px; background: #434345; padding-left: 2px; }
.tabs button { color: #eee; padding: 0 5px; }
.tabs .active { background: #edeef0; color: #333; border-radius: 1px 1px 0 0; }
.tabs .ribbon-toggle { margin-left: 7px; }
.ribbon-toggle svg { width: 14px; height: 6px; }

.ribbon {
  display: grid;
  grid-template-columns: 114fr 72fr 116fr 48fr 44fr 88fr 37fr 33fr 33fr 5fr;
  height: 54px;
  background: #fbfbfc;
  border-bottom: 4px solid #727579;
}
.panel { display: flex; flex-direction: column; min-width: 0; border-right: 1px solid #c6c8cb; }
.body { flex: 1; display: flex; padding: 2px 1px 0 2px; min-width: 0; }
.caption { height: 10px; gap: 3px; background: #ebecee; border-top: 1px solid #dadcde; }
.caption-row { display: flex; background: #ebecee; }
.caption-row .caption { flex: 1; }
.launcher { width: 9px; border-top: 1px solid #dadcde; }
.launcher svg { width: 5px; height: 5px; }
.tail { background: linear-gradient(#8e9195, #c3c5c8); }
.big { flex: 1 1 0; flex-direction: column; justify-content: flex-start; padding-top: 1px; font-size: 6px; line-height: 8px; }
.big-ic { width: 18px; height: 18px; }
.big span { margin-top: 2px; }
.big .tri { margin-top: 1px; }
.text-tool b { font-size: 20px; line-height: 18px; height: 18px; font-weight: 600; color: #3d4146; font-family: "Liberation Sans", sans-serif; }
.col { display: flex; flex-direction: column; justify-content: space-around; }
.small { width: 12px; height: 12px; background: #f3f5f7; border: 1px solid #eceef1; box-sizing: border-box; }
.small.wide { width: 18px; justify-content: flex-start; gap: 1px; }
.small.on { background: #98c9ee; border-color: #4a8fc4; }
.draw { padding-right: 2px; }
.modify { display: grid; grid-template-columns: 12px 12px 18px 12px; justify-content: space-between; align-content: space-around; padding: 2px 3px 0 2px; }
.rows { flex-direction: column; justify-content: space-around; }
.layer-tools { display: flex; justify-content: space-between; padding: 0 2px; }
.combo { display: flex; align-items: center; box-sizing: border-box; flex: 1; max-height: 12px; min-width: 0; padding: 0 1px 0 2px; background: linear-gradient(#fff, #f2f3f5); border: 1px solid #dddfe2; }
.combo select { appearance: none; flex: 1; height: 10px; line-height: 10px; }
.combo.icons { gap: 2px; }
.swatch { width: 8px; height: 8px; box-sizing: border-box; border: 1px solid #555; background: #fff; flex: none; }
.prop { display: flex; align-items: center; gap: 2px; }
.prop .combo { height: 12px; }
.prop i { width: 32px; height: 1px; background: #444; margin-right: 1px; }

.canvas { position: relative; flex: 1; min-height: 240px; background: #212830; overflow: hidden; border: solid #15191e; border-width: 1px 1px 0 0; }
.grid { position: absolute; width: 100%; height: 100%; }
.view-label { position: absolute; left: 2px; top: 1px; font-size: 7px; line-height: 9px; color: #e3e5e8; }
.doc-buttons { position: absolute; right: 4px; top: 2px; display: flex; gap: 3px; }
.doc-buttons svg { width: 8px; height: 8px; }
.cube { position: absolute; right: 6px; top: 18px; width: 74px; height: 78px; }
.cube text { text-anchor: middle; font-family: "Noto Sans CJK SC", sans-serif; }
.wcs { position: absolute; right: 30px; top: 103px; width: 26px; height: 9px; justify-content: flex-start; padding-left: 3px; border-radius: 2px; background: #a1a5a9; color: #666b70; font-size: 6px; line-height: 8px; }
.nav-bar { position: absolute; right: 0; top: 126px; width: 18px; height: 115px; }
.ucs { position: absolute; left: -1px; bottom: 0; width: 52px; height: 46px; }
.cross { position: absolute; left: 191px; bottom: 22px; width: 53px; height: 53px; }
.cmd { position: absolute; left: 119px; right: 116px; bottom: 0; }
.history { width: 200px; margin-left: 30px; font-family: "Liberation Mono", "Noto Sans CJK SC", monospace; font-size: 7px; line-height: 10px; color: #5f646b; background: #2a3037; white-space: nowrap; }
.cmd-line { display: flex; height: 14px; background: #b9bbbd; }
.cmd-tools { display: flex; align-items: center; gap: 3px; padding: 0 3px 0 5px; background: linear-gradient(#6b6e71, #4b4e51); }
.flip { transform: scaleX(-1); }
.prompt { padding: 0 2px; }
.prompt svg { width: 16px; height: 10px; }
.cmd-line input { flex: 1; }
.cmd-line input::placeholder { color: #74777a; opacity: 1; }
.up { width: 9px; }
.up svg { width: 6px; height: 6px; }
.watermark { position: absolute; right: 4px; bottom: 16px; font-size: 30px; line-height: 36px; font-style: italic; font-weight: 700; color: rgba(110, 115, 120, .15); white-space: nowrap; pointer-events: none; }

.layouts { display: flex; height: 10px; background: #f7f7f8; padding-left: 1px; }
.pager { width: 8px; box-sizing: border-box; border-right: 1px solid #c4c4c4; }
.pager svg { width: 7px; height: 7px; }
.layout { position: relative; padding: 0 3px; margin-right: 1px; color: #222; }
.layout::after { content: ""; position: absolute; right: -1px; top: 0; width: 1px; height: 10px; background: #555; transform: skewX(-25deg); }
.layout.active { color: #fff; margin-left: 1px; padding: 0 4px; }
.layout.active::before { content: ""; position: absolute; inset: 0; background: #1b2026; transform: skewX(-25deg); }
.layout span { position: relative; }

.status { display: flex; align-items: stretch; height: 12px; border: solid #76797c; border-width: 1px 0 0; background: linear-gradient(#a7a9ab, #8d8f91); color: #222; }
.coords { width: 117px; box-sizing: border-box; padding-left: 5px; font-family: "Liberation Mono", monospace; font-size: 6px; line-height: 12px; white-space: nowrap; }
.st { width: 12px; background: #b9bbbd; border-right: 1px solid #85878a; box-sizing: border-box; }
.st.on { background: #b2e0ee; }
.st.auto { width: auto; padding: 0 2px; }
.st.dark { background: #77797c; }
.st.more { width: 8px; }
.scale { gap: 2px; }
.dim { opacity: .5; }
.sep { width: 10px; background: #7f8184; }
.sep.thin { width: 5px; }
.grip { width: 10px; height: 12px; }
</style>
